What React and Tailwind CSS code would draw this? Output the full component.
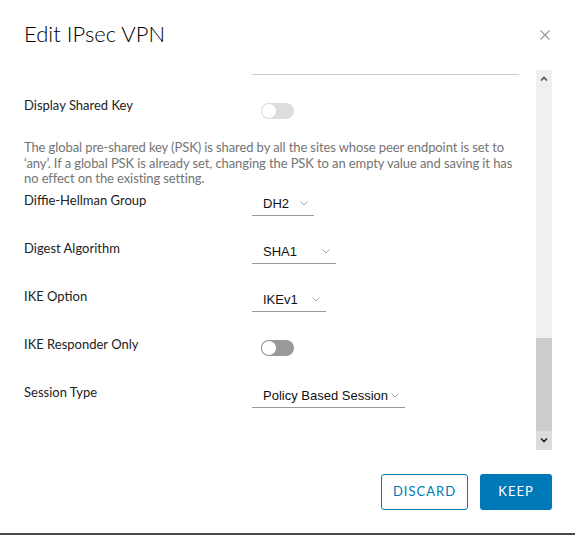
import React from "react";

const SANS = { fontFamily: "Lato, 'Open Sans', sans-serif" };
const ARIAL = { fontFamily: "'Liberation Sans', Arial, sans-serif" };

function Toggle({ dark }) {
  return (
    <div
      className={`mt-[6px] ml-[9px] w-[33px] h-[16px] rounded-full ${
        dark ? "bg-[#999999]" : "bg-[#dddddd]"
      } flex items-center`}
    >
      <div
        className={`w-[16px] h-[16px] rounded-full bg-white border ${
          dark ? "border-[#999999]" : "border-[#dddddd]"
        }`}
      />
    </div>
  );
}

function Select({ value, width }) {
  return (
    <div
      className="relative h-[24px] pt-[4px] pl-[11px] border-b border-[#9a9a9a] text-[13px] leading-4 text-[#111]"
      style={{ ...ARIAL, width }}
    >
      {value}
      <svg
        className="absolute right-[6px] top-[9px]"
        width="8"
        height="5"
        viewBox="0 0 8 5"
        fill="none"
      >
        <path d="M0.5 0.5 L4 4 L7.5 0.5" stroke="#a6a6a6" strokeWidth="1" />
      </svg>
    </div>
  );
}

function Row({ label, children }) {
  return (
    <div className="flex h-[48px] items-start">
      <div className="w-[228px] text-[13px] leading-4 text-[#222]">{label}</div>
      {children}
    </div>
  );
}

export default function App() {
  return (
    <div
      className="w-[575px] h-[535px] bg-white flex flex-col border-b-2 border-[#4a4a4a] overflow-hidden"
      style={SANS}
    >
      {/* header */}
      <div className="h-[70px] flex items-start justify-between pl-[24px] pr-[25px] pt-[20px]">
        <h1 className="text-[22px] leading-[28px] font-light text-black">Edit IPsec VPN</h1>
        <svg className="mt-[10px]" width="10" height="10" viewBox="0 0 10 10">
          <path d="M0.5 0.5 L9.5 9.5 M9.5 0.5 L0.5 9.5" stroke="#9a9a9a" strokeWidth="1.2" />
        </svg>
      </div>

      {/* body */}
      <div className="flex h-[380px]">
        <div className="w-[520px] pl-[24px] overflow-hidden">
          <div className="mt-[4px] ml-[228px] w-[267px] h-px bg-[#cccccc]" />
          <div className="mt-[22px] flex h-[22px] items-start">
            <div className="w-[228px] text-[13px] leading-4 text-[#222]">Display Shared Key</div>
            <Toggle />
          </div>
          <p className="mt-[21px] w-[496px] text-[13px] leading-[15.5px] tracking-[-0.1px] text-[#747474]">
            The global pre-shared key (PSK) is shared by all the sites whose peer endpoint is set to
            ‘any’. If a global PSK is already set, changing the PSK to an empty value and saving it has
            no effect on the existing setting.
          </p>
          <div className="mt-[5px]">
            <Row label="Diffie-Hellman Group">
              <Select value="DH2" width="62px" />
            </Row>
            <Row label="Digest Algorithm">
              <Select value="SHA1" width="84px" />
            </Row>
            <Row label="IKE Option">
              <Select value="IKEv1" width="74px" />
            </Row>
            <Row label="IKE Responder Only">
              <div className="-mt-[2px]">
                <Toggle dark />
              </div>
            </Row>
            <Row label="Session Type">
              <Select value="Policy Based Session" width="153px" />
            </Row>
          </div>
        </div>

        {/* scrollbar */}
        <div className="ml-[16px] w-[16px] flex flex-col bg-[#f0f0f0]">
          <div className="h-[17px] flex items-center justify-center">
            <svg width="8" height="5" viewBox="0 0 8 5">
              <path d="M1 4.5 L4 1.5 L7 4.5" stroke="#505050" strokeWidth="1.6" fill="none" />
            </svg>
          </div>
          <div className="flex-1" />
          <div className="h-[93px] bg-[#cdcdcd]" />
          <div className="h-[19px] bg-[#dcdcdc] flex items-center justify-center">
            <svg width="8" height="5" viewBox="0 0 8 5">
              <path d="M1 0.5 L4 3.5 L7 0.5" stroke="#202020" strokeWidth="1.6" fill="none" />
            </svg>
          </div>
        </div>
      </div>

      {/* footer */}
      <div className="flex justify-end gap-[12px] pr-[23px] pt-[24px]">
        <button className="w-[87px] h-[36px] rounded-[3px] border border-[#0079b8] text-[#0079b8] text-[13px] tracking-[1px] bg-white">
          DISCARD
        </button>
        <button className="w-[72px] h-[36px] rounded-[3px] bg-[#0079b8] text-white text-[13px] tracking-[1px]">
          KEEP
        </button>
      </div>
    </div>
  );
}
